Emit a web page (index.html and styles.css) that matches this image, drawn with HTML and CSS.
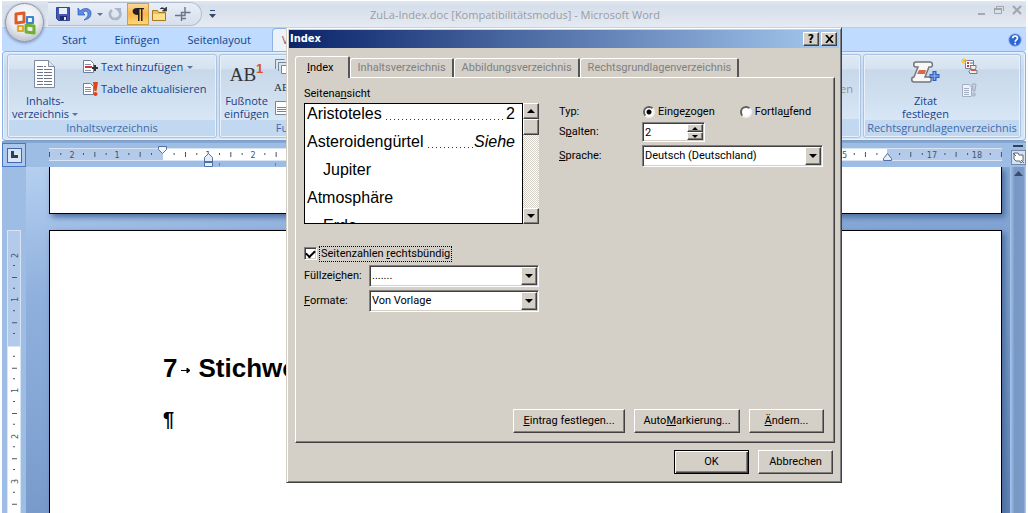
FILE: index.html
```html
<!DOCTYPE html>
<html lang="de">
<head>
<meta charset="utf-8">
<title>ZuLa-Index.doc [Kompatibilitätsmodus] - Microsoft Word</title>
<link rel="stylesheet" href="styles.css">
</head>
<body>
<div class="app">
  <header class="titlebar">
    <div class="quick">
      <button class="qbtn" aria-label="Speichern"><svg width="16" height="16"><path d="M1.500 1.500h13v13h-11l-2-2z" fill="#4757b5" stroke="#34449a"/><path d="M4 2h8v6H4z" fill="#e9eefb"/><path d="M5 10h7v4H5z" fill="#1f2c63"/><path d="M9 11h2v3H9z" fill="#dfe6f7"/></svg></button>
      <button class="qbtn" aria-label="Rückgängig"><svg width="16" height="16"><path d="M1 2v7h7L6 7c2-3 5-2 5 1 0 2-1 4-4 6 5-1 7-3 7-7 0-5-7-6-11-2z" fill="#5d8be0" stroke="#2c58b4" stroke-width=".7"/></svg></button>
      <span class="caret"></span>
      <button class="qbtn redo" aria-label="Wiederholen"><svg width="16" height="16"><path d="M5 4C1 7 3 13 8 13s7-5 4-8" fill="none" stroke="#a9b7cc" stroke-width="2.500"/><path d="M7 2h7v6z" fill="#a9b7cc"/></svg></button>
      <button class="qbtn marks" aria-label="Formatierungszeichen"><svg width="16" height="16"><path d="M7 2h7v1.300h-1.500V15h-1.500V3.300H9.500V15H8V9C1 9 1 2 7 2z" fill="#222"/></svg></button>
      <button class="qbtn" aria-label="Öffnen"><svg width="18" height="16"><path d="M1.500 4.500h5l1 2h7v8h-13z" fill="#f0bf55" stroke="#a8761c"/><path d="M2 8h12v6H2z" fill="#ffe08a"/><path d="M9 3c2-2 3-1 5 0M15.500 1v4h-4z" stroke="#333" fill="#333" stroke-width=".8"/></svg></button>
      <button class="qbtn last" aria-label="Zuschneiden"><svg width="18" height="16"><path d="M1 9.500h10V1M7.500 15V6.500h9M7 12.500h5" fill="none" stroke="#66768c" stroke-width="1.400"/></svg></button>
    </div>
    <button class="custom" aria-label="Anpassen"><svg width="7" height="8"><path d="M1 0h5v1H1zM0 4h7L3.500 8z" fill="#33486f"/></svg></button>
    <h1 class="doc-title">ZuLa-Index.doc [Kompatibilitätsmodus] - Microsoft Word</h1>
    <div class="winctl">
      <button aria-label="Minimieren"><svg width="10" height="10"><path d="M2 8h7v2H2z" fill="#a7a9ae"/></svg></button>
      <button aria-label="Verkleinern"><svg width="10" height="10"><path d="M2.500 3V1.500h7V6M.500 3.500h7v5h-7z" fill="none" stroke="#a2a5aa"/><path d="M0 3h8v2H0z" fill="#a2a5aa"/></svg></button>
      <button aria-label="Schließen"><svg width="10" height="10"><path d="M1 1l8 8M9 1L1 9" stroke="#a2a5aa" stroke-width="2"/></svg></button>
    </div>
  </header>
  <nav class="tabs">
    <button>Start</button><button>Einfügen</button><button>Seitenlayout</button><button class="active">Verweise</button>
    <button class="help" aria-label="Hilfe"><svg width="14" height="14"><circle cx="7" cy="7" r="6.300" fill="#2c66d6" stroke="#9db7e0"/><path d="M4.700 5.300c0-3 4.800-3 4.800-.2C9.500 7 7.200 6.800 7.200 8.800M7.200 9.800v1.800" stroke="#fff" stroke-width="1.700" fill="none"/></svg></button>
  </nav>
  <section class="ribbon">
    <div class="group g-toc">
      <div class="tools">
        <button class="big"><svg width="32" height="32"><path d="M5.500 2.500h14l6 6v21h-20z" fill="#fff" stroke="#7d8ba3"/><path d="M19.500 2.500v6h6" fill="#dfe6f1" stroke="#7d8ba3"/><path d="M8 8.500h9M8 11.500h15M8 14.500h15M8 17.500h15M8 20.500h15M8 23.500h15M8 26.500h15" stroke="#6a7587" stroke-dasharray="6 1 8 1"/></svg><span>Inhalts-<br>verzeichnis <i class="caret"></i></span></button>
        <div class="stack">
          <button class="small"><svg width="17" height="16"><path d="M1.500 1.500h7l3 3v9h-10z" fill="#fff" stroke="#6f7f9b"/><path d="M3 5.500h6M3 11.500h6" stroke="#8793a8"/><path d="M3 8h7" stroke="#d33" stroke-width="2"/><path d="M10 9h6M13 6v6" stroke="#333" stroke-width="2"/></svg>Text hinzufügen <i class="caret"></i></button>
          <button class="small"><svg width="17" height="16"><path d="M1.500 2.500h7l3 3v8h-10z" fill="#fff" stroke="#6f7f9b"/><path d="M3 6.500h6M3 8.500h6M3 10.500h6" stroke="#8793a8"/><path d="M11 1h5l-1.500 9h-2z" fill="#df4418"/><circle cx="13.500" cy="13" r="2" fill="#df4418"/></svg>Tabelle aktualisieren</button>
        </div>
      </div>
      <div class="caption">Inhaltsverzeichnis</div>
    </div>
    <div class="group g-foot">
      <div class="tools">
        <button class="big"><span class="ab">AB<sup>1</sup></span><span>Fußnote<br>einfügen</span></button>
        <div class="stack icons">
          <svg width="16" height="16"><path d="M1.500 11V1.500h9M4.500 13V4.500h9" fill="none" stroke="#77859c"/><path d="M7.500 7.500h7v8h-7z" fill="#fff" stroke="#77859c"/></svg>
          <span class="ab2">AB</span>
          <svg width="16" height="16"><path d="M1.500 1.500h13v13h-13z" fill="#fff" stroke="#77859c"/><path d="M3 7.500h10M3 9.500h10M3 11.500h10" stroke="#77859c"/></svg>
        </div>
      </div>
      <div class="caption">Fußnoten</div>
    </div>
    <div class="group g-index">
      <div class="tools"><button class="small" disabled>Index aktualisieren</button></div>
      <div class="caption">Index</div>
    </div>
    <div class="group g-law">
      <div class="tools">
        <button class="big"><svg width="34" height="32"><path d="M8 4h14c3 0 3 5 1 5h-2l-4 10h4c3 0 3 5 0 5H6c-3 0-3-5 0-5l4-10H8C5 9 5 4 8 4z" fill="#f7f7f7" stroke="#74777c" stroke-width="1.500"/><path d="M11 12h7l-1 4H9z" fill="#d8674c"/><path d="M21.500 18h10M26.500 13v10" stroke="#2e5fc0" stroke-width="4"/><path d="M22.500 18h8M26.500 14v8" stroke="#7fa9ee" stroke-width="1.500"/></svg><span>Zitat<br>festlegen</span></button>
        <div class="stack icons">
          <svg width="17" height="17"><path d="M4.500 2.500h8v8h-8z" fill="#fff" stroke="#7382a0"/><path d="M6 5h2M6 8h2" stroke="#d33" stroke-width="2"/><path d="M9 5h3" stroke="#567"/><path d="M0 3h6M3 0v6M1 1l4 4M5 1L1 5" stroke="#f2bd26"/><path d="M9 7.500h6v2l-1 3h2v3H9l-1-2 2-3z" fill="#eee" stroke="#777"/><path d="M10 11h4v2h-4z" fill="#d65a3c"/></svg>
          <svg width="17" height="16"><path d="M1.500 2.500h7l2 3v9h-9z" fill="#eef2f8" stroke="#a3b0c4"/><path d="M3 6.500h5M3 8.500h5M3 10.500h5M3 12.500h5" stroke="#a3b0c4"/><path d="M11 2h4l-1 7h-2zM12 11h2v3h-2z" fill="#c3cedf" stroke="#a3b0c4"/></svg>
        </div>
      </div>
      <div class="caption">Rechtsgrundlagenverzeichnis</div>
    </div>
  </section>

  <main class="work">
    <div class="corner"><button aria-label="Tabstopp"><svg width="8" height="8"><path d="M1 0h3v4h4v3H1z" fill="#2b3f63"/></svg></button></div>
    <div class="hruler">
      <svg class="hscale" width="100%" height="28">
        <rect x="0" y="5" width="100%" height="13" fill="#b3caea"/>
        <rect x="114" y="5" width="724" height="13" fill="#fff"/>
        <path d="M0 5.500h953M0 17.500h953" stroke="#d9e5f5"/>
        <path d="M0 11.500h953" stroke="#4a5566" stroke-width="5" stroke-dasharray="1 44.330"/>
        <path d="M11.300 11h942" stroke="#4a5566" stroke-width="2" stroke-dasharray="1 21.670"/>
        <g class="nums">
          <text x="23" y="15">2</text><text x="68" y="15">1</text><text x="159" y="15">1</text><text x="204" y="15">2</text><text x="250" y="15">3</text><text x="793" y="15">15</text><text x="883" y="15">17</text><text x="928" y="15">18</text>
        </g>
        <path d="M109.500 3.500h8v3l-4 4-4-4z" fill="#f4f7fc" stroke="#4f71a8"/>
        <path d="M155.500 19.500v-5l4-4 4 4v5zM155.500 18.500h8v5h-8z" fill="#e6edf7" stroke="#4f71a8"/>
        <path d="M834.500 17.500v-2l4-5 4 5v2z" fill="#e6edf7" stroke="#4f71a8"/>
        <path d="M170.500 20v3M226.500 20v3" stroke="#72819b"/>
      </svg>
    </div>
    <div class="rcell"><i></i><button aria-label="Lineal"><svg width="13" height="12"><path d="M2 1h4l1 2h4v6l-2 2-1-2H4L2 7z" fill="#fff" stroke="#5b6574"/><path d="M1 1l3 3M12 11L9 8" stroke="#5b6574"/></svg></button></div>
    <div class="vruler">
      <svg width="14" height="346">
        <rect x="0" y="63" width="14" height="116" fill="#b3caea"/>
        <rect x="0" y="179" width="14" height="167" fill="#fff"/>
        <path d="M.500 346V63.500h13V346M0 179.500h14" fill="none" stroke="#d9e5f5"/>
        <path d="M7.500 110v236" stroke="#4a5566" stroke-width="5" stroke-dasharray="1 44.330"/>
        <path d="M7 98v248" stroke="#4a5566" stroke-width="2" stroke-dasharray="1 21.670"/>
        <g class="nums">
          <text transform="translate(11 91) rotate(-90)">2</text><text transform="translate(11 135) rotate(-90)">1</text><text transform="translate(11 226) rotate(-90)">1</text><text transform="translate(11 272) rotate(-90)">2</text><text transform="translate(11 317) rotate(-90)">3</text>
        </g>
      </svg>
    </div>
    <div class="canvas">
      <article class="page prev"></article>
      <article class="page">
        <h2>7<svg width="12" height="10"><path d="M1 5.500h8M7 3l3 2.500L7 8z" stroke="#000" fill="#000"/></svg>Stichwortverzeichnis</h2>
        <p>¶</p>
      </article>
    </div>
    <div class="vscroll"><svg width="9" height="5"><path d="M0 5l4.500-5L9 5z" fill="#3d4b66"/></svg></div>
  </main>

  <button class="office" aria-label="Office"><svg width="28" height="28" fill="none" stroke-width="3" stroke-linejoin="round"><path d="M5 5l8-1v9l-8 1z" stroke="#df5a28"/><path d="M16 8h6v6h-6z" stroke="#3f86c8" stroke-width="2.200"/><path d="M7 17h5v5H7z" stroke="#e8a725" stroke-width="2.200"/><path d="M15 16l8 1v7l-8-1z" stroke="#6fb02f"/></svg></button>
</div>

<div class="dialog" role="dialog" aria-label="Index">
  <div class="dlg-title"><span>Index</span><button class="raised">?</button><button class="raised" aria-label="Schließen"><svg width="9" height="8"><path d="M1 0l7 8M8 0L1 8" stroke="#000" stroke-width="1.700"/></svg></button></div>
  <div class="dlg-tabs">
    <button class="on"><u>I</u>ndex</button><button disabled>Inhaltsverzeichnis</button><button disabled>Abbildungsverzeichnis</button><button disabled>Rechtsgrundlagenverzeichnis</button>
  </div>
  <div class="panel">
    <div class="cols">
      <div class="left">
        <div class="lbl">Seitena<u>n</u>sicht</div>
        <div class="preview">
          <div class="lines">
            <div class="ln"><span>Aristoteles</span><span class="dots"></span><span>2</span></div>
            <div class="ln"><span>Asteroidengürtel</span><span class="dots"></span><em>Siehe</em></div>
            <div class="ln sub">Jupiter</div>
            <div class="ln">Atmosphäre</div>
            <div class="ln sub">Erde</div>
          </div>
          <div class="sbar"><button class="raised" aria-label="Nach oben"><i class="up"></i></button><span class="raised thumb"></span><button class="raised end" aria-label="Nach unten"><i class="down"></i></button></div>
        </div>
        <label class="check"><input type="checkbox" checked><span>Seitenzahlen <u>r</u>echtsbündig</span></label>
        <div class="field"><label for="fill">Füllzei<u>c</u>hen:</label><div class="combo"><select id="fill"><option>.......</option></select><span class="raised"><i class="down"></i></span></div></div>
        <div class="field"><label for="fmt"><u>F</u>ormate:</label><div class="combo"><select id="fmt"><option>Von Vorlage</option></select><span class="raised"><i class="down"></i></span></div></div>
      </div>
      <div class="right">
        <span>Typ:</span>
        <div class="radios"><label><input type="radio" name="typ" checked><span>Einge<u>z</u>ogen</span></label><label><input type="radio" name="typ"><span>Fortla<u>u</u>fend</span></label></div>
        <label for="cols">S<u>p</u>alten:</label>
        <div class="combo spin"><input id="cols" type="text" value="2"><div class="spins"><button class="raised" aria-label="Mehr"><i class="up"></i></button><button class="raised" aria-label="Weniger"><i class="down"></i></button></div></div>
        <label for="lang"><u>S</u>prache:</label>
        <div class="combo"><select id="lang"><option>Deutsch (Deutschland)</option></select><span class="raised"><i class="down"></i></span></div>
      </div>
    </div>
    <div class="actions"><button class="raised wide"><u>E</u>intrag festlegen...</button><button class="raised mid">Auto<u>M</u>arkierung...</button><button class="raised"><u>Ä</u>ndern...</button></div>
  </div>
  <div class="actions foot"><button class="raised ok">OK</button><button class="raised">Abbrechen</button></div>
</div>
</body>
</html>
```
FILE: styles.css
```css
* { box-sizing: border-box; }
body { margin: 0; background: #fff; font: 11px/14px "Open Sans", "Noto Sans", sans-serif; color: #15428b; height: 100vh; overflow: hidden; padding: 1px 2px 0; }
button, input, select { font: inherit; color: inherit; margin: 0; padding: 0; border: 0; background: none; border-radius: 0; }
svg { display: block; flex: none; }
.app { position: relative; height: 100%; display: flex; flex-direction: column; }

.titlebar { height: 27px; flex: none; display: flex; align-items: center; background: linear-gradient(#dfe8f1 0, #d5deea 20%, #dde4ee 60%, #e4ebf3 100%); border-bottom: 1px solid #b8cde6; }
.quick { display: flex; align-items: center; height: 24px; margin-left: 46px; padding-left: 4px; width: 154px; border: 1px solid #b3bfd0; border-left: 0; border-radius: 0 12px 12px 0; background: linear-gradient(#e8eef6, #d6dfec); flex: none; }
.qbtn { width: 22px; height: 22px; display: grid; place-items: center; flex: none; }
.quick .caret { margin: 0 1px; }
.redo { margin: 0 1px 0 0; }
.marks { border: 1px solid #c8a04c; background: linear-gradient(#fbd79a, #fdb54b 50%, #ffd877); }
.last { margin-left: 1px; }
.custom { width: 20px; display: grid; place-items: center; }
.doc-title { flex: 1; margin: 0; padding: 2px 184px 0 16px; font-size: 11px; font-weight: 400; text-align: center; color: #9a9da3; white-space: nowrap; }
.winctl { display: flex; gap: 8px; padding-right: 4px; padding-bottom: 8px; }
.caret { display: inline-block; border: 3px solid transparent; border-top-color: #5576a6; border-bottom: 0; vertical-align: 2px; }

.tabs { height: 23px; flex: none; background: #bfdbff; display: flex; align-items: center; padding: 0 4px 0 44px; }
.tabs button { padding: 0 16px; height: 23px; margin-right: -4px; }
.tabs .active { background: #eaf2fc; border: 1px solid #8db2e3; border-bottom: 0; border-radius: 4px 4px 0 0; padding: 0 9px; color: #b5473a; margin-left: 9px; }
.tabs .help { margin: 0 0 0 auto; padding: 0; display: grid; place-items: center; }

.ribbon { height: 90px; flex: none; display: flex; gap: 2px; padding: 2px 4px; background: linear-gradient(#dbe7f5, #c9daef 20%, #d6e4f3 90%); border: 1px solid #8db2e3; border-bottom-color: #7a9cc6; border-radius: 4px; box-shadow: inset 0 0 0 1px #e6f1fc; }
.group { display: flex; flex-direction: column; border: 1px solid #a9c3e2; border-radius: 3px; background: linear-gradient(#dfe9f5 0, #d6e2f0 17%, #c7d8ea 18%, #d8e6f5 80%); box-shadow: inset 0 0 0 1px #e8f1fb; }
.tools { flex: 1; display: flex; padding: 3px 4px 0; }
.caption { height: 17px; margin: 0 1px 1px; line-height: 15px; text-align: center; white-space: nowrap; background: #c1d8f0; color: #3e6aaa; }
.big { display: flex; flex-direction: column; align-items: center; justify-content: space-between; line-height: 13px; height: 62px; }
.stack { display: flex; flex-direction: column; }
.small { display: flex; align-items: center; gap: 2px; height: 22px; white-space: nowrap; }
.small .caret { margin-left: 2px; }
.small:disabled { color: #8d9199; }
.g-toc { width: 210px; }
.g-toc .stack { margin: -2px 0 0 4px; }
.g-foot { width: 163px; }
.g-foot .tools { padding-left: 4px; }
.g-index { flex: 1; }
.g-index .tools { justify-content: flex-end; align-items: center; padding-right: 7px; }
.g-law { width: 158px; }
.g-law .tools { padding-left: 38px; gap: 12px; }
.g-law .icons { gap: 7px; }
.ab { font: 19px/34px "Liberation Serif", serif; color: #333; }
.ab sup { font: bold 13px/10px "Liberation Sans", sans-serif; color: #d8502c; vertical-align: 8px; }
.ab2 { font: 11px/14px "Liberation Serif", serif; color: #333; }
.g-foot .icons { gap: 6px; margin-left: 5px; }

.work { flex: 1; min-height: 0; display: grid; grid-template-columns: 24px 1fr 16px; grid-template-rows: 24px 1fr; background: #9ebde4; border-top: 2px solid #86a6d2; }
.corner { border: 1px solid #4876c8; background: #aec8ec; display: grid; place-items: center; }
.corner button { width: 15px; height: 15px; border: 1px solid #3f68ad; background: #dbe6f5; display: grid; place-items: center; }
.hruler { padding: 0 8px 0 23px; overflow: hidden; }
.hscale { overflow: hidden; }
.nums { font: 9px "DejaVu Sans Condensed", "DejaVu Sans", sans-serif; fill: #4a5566; }
.hscale .nums text { text-anchor: middle; }
.rcell { display: flex; flex-direction: column; align-items: center; gap: 3px; padding-top: 2px; }
.rcell i { width: 10px; height: 2px; background: #33415c; }
.rcell button { width: 15px; height: 15px; background: #d5e1f0; border: 1px solid #7389a8; display: grid; place-items: center; }
.vruler { padding-left: 5px; overflow: hidden; }
.canvas { overflow: hidden; display: flex; flex-direction: column; gap: 16px; padding: 0 8px 0 23px; background: linear-gradient(168deg, #b5cff0 0, #8fb0dc 24%, #84a6d5 45%, #5c81b6 100%); }
.page { flex: 1; background: #fff; border: 1px solid #000; border-bottom: 0; box-shadow: 3px 3px 6px #4a6a9a; padding: 122px 0 0 113px; color: #000; font-family: "Liberation Sans", Arial, sans-serif; overflow: hidden; }
.page.prev { flex: 0 0 47px; padding: 0; border-top: 0; border-bottom: 1px solid #000; }
.page h2 { margin: 0; display: flex; align-items: center; font-size: 26px; line-height: 30px; font-weight: 700; }
.page h2 svg { margin: 4px 6px 0 3px; }
.page p { margin: 24px 0 0; font-size: 20px; line-height: 24px; font-weight: 700; }
.vscroll { background: linear-gradient(90deg, #a9c6ea 0, #7797c4 30%, #7b9cc9 85%, #b5cfee 100%); display: flex; justify-content: center; padding-top: 4px; }
.office { position: absolute; left: 3px; top: 2px; width: 39px; height: 39px; border-radius: 50%; border: 1px solid #8c97a8; background: radial-gradient(circle at 50% 35%, #fff 0, #e9ebf0 50%, #c3c9d4 75%, #f6f8fb 100%); box-shadow: 0 1px 3px #7b8ba5; display: grid; place-items: center; }

.dialog { position: absolute; left: 286px; top: 27px; width: 556px; height: 456px; display: flex; flex-direction: column; padding: 1px 2px 8px 1px; background: #d4d0c8; color: #000; font: 11px/14px Roboto, "DejaVu Sans Condensed", sans-serif; border: 1px solid; border-color: #d4d0c8 #404040 #404040 #d4d0c8; box-shadow: inset 1px 1px #fff, inset -1px -1px #808080; }
.raised { background: #d4d0c8; border: 1px solid; border-color: #fff #404040 #404040 #fff; box-shadow: inset -1px -1px #808080; display: grid; place-items: center; }
.dlg-title { height: 18px; flex: none; display: flex; align-items: center; gap: 2px; padding: 0 2px 0 1px; margin: 1px 0 0 1px; background: linear-gradient(90deg, #0a246a, #a6caf0); color: #fff; font: bold 11px/14px "DejaVu Sans Condensed", "DejaVu Sans", sans-serif; }
.dlg-title span { flex: 1; }
.dlg-title button { width: 16px; height: 14px; color: #000; font-size: 12px; line-height: 10px; }
.dlg-tabs { display: flex; align-items: flex-end; height: 29px; padding-left: 7px; flex: none; }
.dlg-tabs button { height: 19px; padding: 0 6px 0 7px; border: 1px solid #fff; border-right: 2px solid #555; border-bottom: 0; border-radius: 3px 2px 0 0; color: #808080; white-space: nowrap; }
.dlg-tabs .on { height: 22px; margin-bottom: -1px; background: #d4d0c8; color: #000; padding: 0 14px 0 11px; z-index: 1; }
.panel { flex: 1; margin: 0 4px 0 7px; padding: 9px 10px 9px 8px; display: flex; flex-direction: column; justify-content: space-between; border: 1px solid; border-color: #fff #404040 #404040 #fff; box-shadow: inset -1px -1px #808080; }
.cols { display: grid; grid-template-columns: 235px 1fr; gap: 20px; }
.lbl { height: 16px; }
.preview { display: flex; height: 121px; }
.lines { flex: 1; background: #fff; border: 1px solid #000; overflow: hidden; font: 16px/28px "Liberation Sans", Arial, sans-serif; padding: 1px 7px 0 2px; display: flex; flex-direction: column; }
.ln { display: flex; flex: none; white-space: nowrap; }
.ln:first-child { line-height: 18px; margin-bottom: 5px; }
.ln.sub { padding-left: 16px; }
.dots { flex: 1; margin: 10px 0 0 4px; height: 1px; align-self: center; background: repeating-linear-gradient(90deg, #333 0 1px, transparent 1px 4px); }
.sbar { width: 16px; display: flex; flex-direction: column; background: repeating-conic-gradient(#fff 0 25%, #d4d0c8 0 50%) 0 0 / 2px 2px; }
.sbar .raised { height: 16px; }
.sbar .end { margin-top: auto; }
.up, .down { display: block; border: 4px solid transparent; }
.up { border-bottom-color: #000; border-top: 0; }
.down { border-top-color: #000; border-bottom: 0; }
.check { display: flex; align-items: center; gap: 2px; margin: 21px 0 3px; height: 17px; }
.check span { border: 1px dotted #000; padding: 0 1px; white-space: nowrap; }
.check input { appearance: none; width: 13px; height: 13px; background: #fff; border: 1px solid; border-color: #808080 #fff #fff #808080; box-shadow: inset 1px 1px #404040, inset -1px -1px #d4d0c8; display: grid; place-items: center; }
.check input:checked::before { content: ""; width: 7px; height: 4px; border: solid #000; border-width: 0 0 2px 2px; transform: rotate(-45deg); margin-bottom: 2px; }
.field { display: grid; grid-template-columns: 65px 1fr; align-items: center; margin-bottom: 3px; }
.combo { position: relative; height: 22px; background: #fff; border: 1px solid; border-color: #808080 #fff #fff #808080; box-shadow: inset 1px 1px #404040, inset -1px -1px #d4d0c8; }
.combo select, .combo input { appearance: none; width: 100%; height: 100%; padding: 0 2px; outline: 0; display: block; }
.combo > .raised { position: absolute; top: 1px; right: 1px; bottom: 1px; width: 16px; pointer-events: none; }
.right { display: grid; grid-template-columns: 64px 181px; column-gap: 19px; row-gap: 3px; align-content: start; align-items: center; padding-top: 18px; }
.radios { display: flex; gap: 24px; white-space: nowrap; }
.radios label { display: flex; align-items: center; }
.radios input { appearance: none; width: 12px; height: 12px; margin-right: 3px; margin-left: 1px; border-radius: 50%; border: 2px solid; border-color: #606060 #f4f2ee #f4f2ee #606060; background: #fff; }
.radios input:checked { background: radial-gradient(circle, #000 2px, #fff 3px); }
.spin { width: 63px; height: 20px; }
.spins { position: absolute; top: 1px; right: 1px; bottom: 1px; width: 16px; display: grid; grid-template-rows: 1fr 1fr; }
.spins i { border-width: 3px; }
.spins .up { border-top: 0; }
.spins .down { border-bottom: 0; }
.actions { display: flex; justify-content: flex-end; gap: 9px; }
.actions .raised { display: block; height: 24px; width: 75px; white-space: nowrap; text-align: center; }
.actions .wide { width: 112px; }
.actions .mid { width: 106px; }
.foot { padding: 7px 6px 0 0; }
.actions .ok { border-color: #000; box-shadow: inset 1px 1px #fff, inset -1px -1px #404040, inset -2px -2px #808080; }
```
